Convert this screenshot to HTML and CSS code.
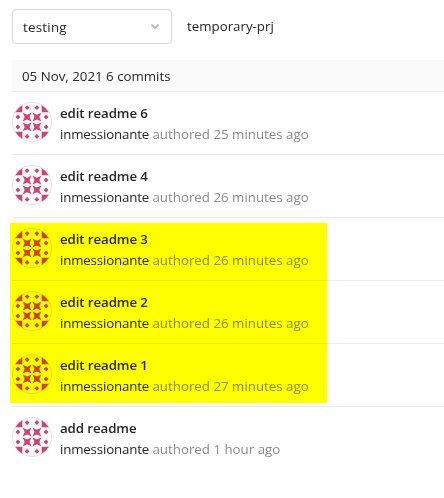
FILE: index.html
```
<!DOCTYPE html>
<html lang="en">
<head>
<meta charset="utf-8">
<title>Commits</title>
<link rel="stylesheet" href="styles.css">
</head>
<body>
<svg class="defs" aria-hidden="true">
  <symbol id="avatar" viewBox="0 0 40 40">
    <circle cx="20" cy="20" r="19.5" fill="#fff" stroke="#e2e2e2"/>
    <g fill="#d63e6c">
      <path id="quad" d="M3.3 10.3A19 19 0 0 1 10.3 3.3V10.3ZM15.1 3.2l2.4 2.4-2.4 2.4-2.4-2.4ZM5.9 12.6l2.4 2.4-2.4 2.4-2.4-2.4ZM10.7 10.7l4.4 2 4.4-2-2 4.4 2 4.4-4.4-2-4.4 2 2-4.4Z"/>
      <use href="#quad" transform="translate(40 0) scale(-1 1)"/>
      <use href="#quad" transform="translate(0 40) scale(1 -1)"/>
      <use href="#quad" transform="translate(40 40) scale(-1 -1)"/>
    </g>
  </symbol>
</svg>
<header class="toolbar">
  <div class="select">
    <span class="value">testing</span>
    <svg class="chevron" viewBox="0 0 10 8"><path d="M1.5 1.5 5 5 8.5 1.5" fill="none" stroke="#bfbfbf" stroke-width="2"/></svg>
  </div>
  <span class="project">temporary-prj</span>
</header>
<main class="history">
  <h2 class="day"><span class="day-text">05 Nov, 2021 6 commits</span></h2>
  <ul class="commits">
    <li class="commit"><svg class="avatar"><use href="#avatar"/></svg><div><p class="title"><span>edit readme 6</span></p><p class="meta"><span class="author">inmessionante</span> <span class="when">authored 25 minutes ago</span></p></div></li>
    <li class="commit"><svg class="avatar"><use href="#avatar"/></svg><div><p class="title"><span>edit readme 4</span></p><p class="meta"><span class="author">inmessionante</span> <span class="when">authored 26 minutes ago</span></p></div></li>
    <li class="commit"><svg class="avatar"><use href="#avatar"/></svg><div><p class="title"><span>edit readme 3</span></p><p class="meta"><span class="author">inmessionante</span> <span class="when">authored 26 minutes ago</span></p></div></li>
    <li class="commit"><svg class="avatar"><use href="#avatar"/></svg><div><p class="title"><span>edit readme 2</span></p><p class="meta"><span class="author">inmessionante</span> <span class="when">authored 26 minutes ago</span></p></div></li>
    <li class="commit"><svg class="avatar"><use href="#avatar"/></svg><div><p class="title"><span>edit readme 1</span></p><p class="meta"><span class="author">inmessionante</span> <span class="when">authored 27 minutes ago</span></p></div></li>
    <li class="commit"><svg class="avatar"><use href="#avatar"/></svg><div><p class="title"><span>add readme</span></p><p class="meta"><span class="author">inmessionante</span> <span class="when">authored 1 hour ago</span></p></div></li>
  </ul>
  <div class="marker"></div>
</main>
</body>
</html>
```
FILE: styles.css
```
* { box-sizing: border-box; }
body {
  margin: 0;
  height: 498px;
  padding: 9px 0 0 12px;
  overflow: hidden;
  background: #fff;
  color: #262626;
  font: 13.3px/21px "Open Sans", "Noto Sans", sans-serif;
}
.defs { position: absolute; width: 0; height: 0; }
.toolbar { display: flex; gap: 15px; height: 35px; }
.select {
  display: flex;
  align-items: center;
  justify-content: space-between;
  width: 160px;
  padding: 1px 11px 0 10px;
  border: 1px solid #d9d9d9;
  border-radius: 4px;
}
.value { letter-spacing: 0.25px; }
.chevron { width: 10px; height: 8px; }
.project { padding-top: 7px; }
.history { position: relative; margin-top: 16px; }
.day {
  height: 32px;
  margin: 0;
  padding: 6px 10px 4px;
  border-bottom: 1px solid #ebebeb;
  background: #fafafa;
  font-size: inherit;
  font-weight: 400;
}
.commits { margin: 0; padding: 0; list-style: none; }
.commit {
  display: flex;
  gap: 8px;
  height: 63px;
  padding-top: 10px;
  border-bottom: 1px solid #ebebeb;
}
.commit:last-child { border-bottom: 0; }
.avatar { width: 40px; height: 40px; }
.title, .meta { margin: 0; white-space: nowrap; }
.title { padding-top: 1px; font-weight: 600; letter-spacing: -0.1px; }
.author { letter-spacing: -0.17px; }
.when { color: #8a8a8a; }
.marker {
  position: absolute;
  left: -2px;
  top: 163px;
  width: 317px;
  height: 180px;
  background: #ff0;
  mix-blend-mode: multiply;
}
```
